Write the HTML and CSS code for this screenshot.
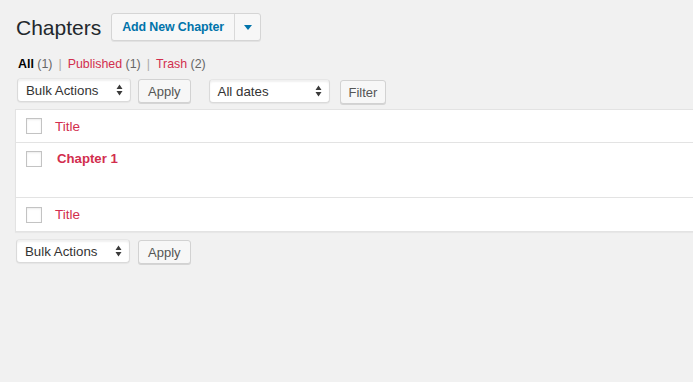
FILE: index.html
```html
<!DOCTYPE html>
<html>
<head>
<meta charset="utf-8">
<link rel="stylesheet" href="styles.css">
</head>
<body>
<div class="wrap">
  <div class="head">
    <h1 class="title">Chapters</h1>
    <div class="split">
      <span class="split-main">Add New Chapter</span>
      <span class="split-arrow"><svg width="8" height="5" viewBox="0 0 8 5"><path d="M0 0h8L4 5z" fill="#0073aa"/></svg></span>
    </div>
  </div>
  <ul class="subsub">
    <li><span class="cur">All</span> <span class="count">(1)</span><span class="sep">|</span></li>
    <li><span class="lnk">Published</span> <span class="count">(1)</span><span class="sep">|</span></li>
    <li><span class="lnk">Trash</span> <span class="count">(2)</span></li>
  </ul>
  <div class="tablenav top">
    <div class="select w-bulk"><span>Bulk Actions</span><svg class="updown" width="7" height="12" viewBox="0 0 7 12"><path d="M0.5 5L3.5 0.5L6.5 5z M0.5 7L3.5 11.5L6.5 7z" fill="#3a3a3a"/></svg></div>
    <div class="btn">Apply</div>
    <div class="select w-dates"><span>All dates</span><svg class="updown" width="7" height="12" viewBox="0 0 7 12"><path d="M0.5 5L3.5 0.5L6.5 5z M0.5 7L3.5 11.5L6.5 7z" fill="#3a3a3a"/></svg></div>
    <div class="btn">Filter</div>
  </div>
  <div class="list">
    <div class="row row-head">
      <span class="cb"></span><span class="col-title lnk">Title</span>
    </div>
    <div class="row row-item">
      <span class="cb"></span><span class="col-title lnk strong">Chapter 1</span>
    </div>
    <div class="row row-foot">
      <span class="cb"></span><span class="col-title lnk">Title</span>
    </div>
  </div>
  <div class="tablenav bottom">
    <div class="select w-bulk"><span>Bulk Actions</span><svg class="updown" width="7" height="12" viewBox="0 0 7 12"><path d="M0.5 5L3.5 0.5L6.5 5z M0.5 7L3.5 11.5L6.5 7z" fill="#3a3a3a"/></svg></div>
    <div class="btn">Apply</div>
  </div>
</div>
</body>
</html>
```
FILE: styles.css
```css
html, body {
  margin: 0;
  padding: 0;
  background: #f1f1f1;
}
body {
  font-family: "Liberation Sans", Arial, sans-serif;
  color: #444;
  font-size: 12.5px;
  overflow: hidden;
  height: 382px;
}
.wrap {
  padding: 13px 0 0 16px;
}
.head {
  display: flex;
  align-items: center;
  height: 28px;
}
.title {
  margin: 0;
  font-size: 21px;
  font-weight: 400;
  color: #23282d;
  line-height: 28px;
  padding-top: 2px;
}
.split {
  display: flex;
  margin-left: 10px;
  height: 26px;
  border: 1px solid #d5d5d5;
  border-radius: 3px;
  background: #f7f7f7;
  box-shadow: 0 1px 0 #e2e2e2;
}
.split-main {
  display: flex;
  align-items: center;
  padding: 0 10px 0 10px;
  color: #0073aa;
  font-weight: 700;
  font-size: 12.4px;
  border-right: 1px solid #d9d9d9;
  width: 102px;
  letter-spacing: -0.1px;
}
.split-arrow {
  display: flex;
  align-items: center;
  justify-content: center;
  width: 25px;
}
.subsub {
  list-style: none;
  margin: 15px 0 0 2px;
  padding: 0;
  display: flex;
  font-size: 12.4px;
  line-height: 16px;
  color: #666;
}
.subsub li {
  white-space: pre;
}
.cur {
  color: #000;
  font-weight: 700;
}
.lnk {
  color: #d22e4e;
}
.count {
  color: #666;
}
.sep {
  color: #aaa;
  padding: 0 6px 0 6px;
}
.tablenav {
  display: flex;
  align-items: flex-start;
  height: 26px;
}
.tablenav.top {
  margin-top: 6px;
}
.tablenav.bottom {
  margin-top: 7px;
}
.select {
  display: flex;
  align-items: center;
  justify-content: space-between;
  box-sizing: border-box;
  height: 24px;
  padding: 0 7px 0 8px;
  background: #fff;
  border: 1px solid #dadada;
  border-top-color: #e6e6e6;
  border-radius: 4px;
  box-shadow: inset 0 2px 2px rgba(0,0,0,0.06), 0 1px 1px rgba(0,0,0,0.05);
  color: #333;
  font-size: 13.3px;
}
.top .w-bulk { margin-left: 1px; width: 114px; }
.bottom .w-bulk { width: 114px; }
.w-dates { width: 121px; margin-left: 18px; margin-top: 1px; }
.btn {
  box-sizing: border-box;
  height: 24px;
  display: flex;
  align-items: center;
  padding: 0 9px;
  margin-left: 7px;
  background: #f7f7f7;
  border: 1px solid #d2d2d2;
  border-radius: 3px;
  box-shadow: 0 1px 0 #d5d5d5;
  color: #555;
  font-size: 13px;
  margin-top: 1px;
}
.bottom .btn { margin-left: 8px; }
.w-dates + .btn { margin-left: 10px; padding: 0 8px; margin-top: 2px; }
.list {
  margin: 5px -20px 0 -1px;
  background: #fff;
  border: 1px solid #e3e3e3;
  box-shadow: 0 1px 1px rgba(0,0,0,0.04);
}
.row {
  display: flex;
  align-items: center;
  padding-left: 10px;
}
.row-head {
  height: 32px;
  border-bottom: 1px solid #e3e3e3;
}
.row-item {
  height: 55px;
  align-items: flex-start;
  padding-top: 8px;
  box-sizing: border-box;
  border-bottom: 1px solid #e3e3e3;
}
.row-foot {
  height: 33px;
}
.cb {
  box-sizing: border-box;
  width: 16px;
  height: 16px;
  border: 1px solid #c3c3c3;
  background: #fff;
  box-shadow: inset 0 1px 2px rgba(0,0,0,0.08);
  flex: none;
}
.col-title {
  margin-left: 13px;
  font-size: 13.5px;
}
.strong {
  font-weight: 700;
  font-size: 13.2px;
  margin-left: 15px;
  margin-top: 0;
}
```
